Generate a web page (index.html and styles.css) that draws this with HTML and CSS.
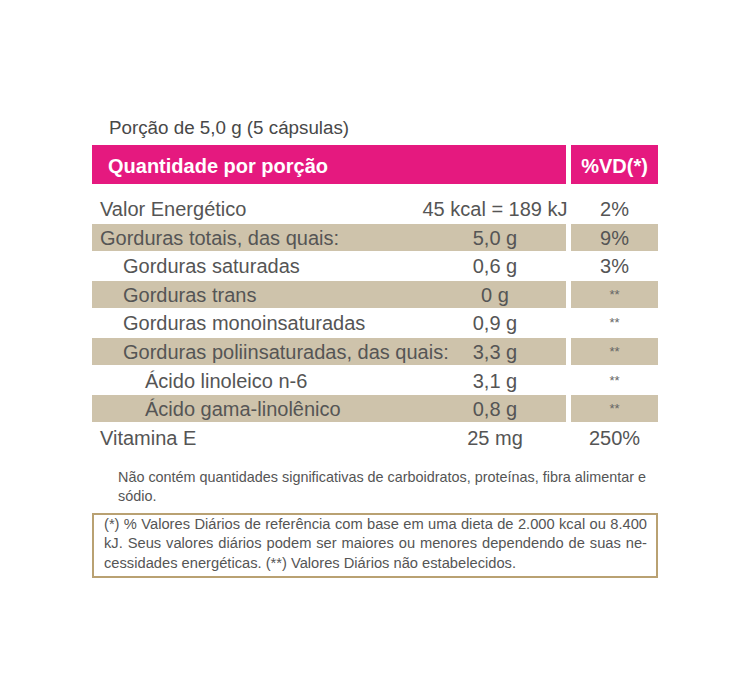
FILE: index.html
```html
<!DOCTYPE html>
<html lang="pt">
<head>
<meta charset="utf-8">
<link rel="stylesheet" href="styles.css">
</head>
<body>
<div class="label">
  <div class="portion">Porção de 5,0 g (5 cápsulas)</div>
  <div class="head">
    <div class="head-cell head-main">Quantidade por porção</div>
    <div class="head-cell head-vd">%VD(*)</div>
  </div>
  <div class="rows">
    <div class="row"><div class="main"><div class="name">Valor Energético</div><div class="val">45 kcal = 189 kJ</div></div><div class="vd">2%</div></div>
    <div class="row shade"><div class="main"><div class="name">Gorduras totais, das quais:</div><div class="val">5,0 g</div></div><div class="vd">9%</div></div>
    <div class="row"><div class="main"><div class="name ind1">Gorduras saturadas</div><div class="val">0,6 g</div></div><div class="vd">3%</div></div>
    <div class="row shade"><div class="main"><div class="name ind1">Gorduras trans</div><div class="val">0 g</div></div><div class="vd small">**</div></div>
    <div class="row"><div class="main"><div class="name ind1">Gorduras monoinsaturadas</div><div class="val">0,9 g</div></div><div class="vd small">**</div></div>
    <div class="row shade"><div class="main"><div class="name ind1">Gorduras poliinsaturadas, das quais:</div><div class="val">3,3 g</div></div><div class="vd small">**</div></div>
    <div class="row"><div class="main"><div class="name ind2">Ácido linoleico n-6</div><div class="val">3,1 g</div></div><div class="vd small">**</div></div>
    <div class="row shade"><div class="main"><div class="name ind2">Ácido gama-linolênico</div><div class="val">0,8 g</div></div><div class="vd small">**</div></div>
    <div class="row"><div class="main"><div class="name">Vitamina E</div><div class="val">25 mg</div></div><div class="vd">250%</div></div>
  </div>
  <p class="note">Não contém quantidades significativas de carboidratos, proteínas, fibra alimentar e sódio.</p>
  <div class="box">
    <span class="jl">(*) % Valores Diários de referência com base em uma dieta de 2.000 kcal ou 8.400</span>
    <span class="jl">kJ. Seus valores diários podem ser maiores ou menores dependendo de suas ne-</span>
    <span class="ll">cessidades energéticas. (**) Valores Diários não estabelecidos.</span>
  </div>
</div>
</body>
</html>
```
FILE: styles.css
```css
html, body {
  margin: 0;
  padding: 0;
  background: #ffffff;
}
body {
  font-family: "Liberation Sans", Arial, sans-serif;
  color: #555555;
}
.label {
  width: 566px;
  margin: 0 auto;
  padding-top: 116px;
}
.portion {
  font-size: 18.8px;
  line-height: 24px;
  color: #484848;
  padding-left: 17px;
  margin-bottom: 5px;
}
.head {
  display: grid;
  grid-template-columns: 474px 87px;
  column-gap: 5px;
  height: 36px;
}
.head-cell {
  background: #e5197f;
  color: #ffffff;
  font-weight: bold;
  font-size: 20px;
  line-height: 36px;
  padding-top: 3px;
  box-sizing: border-box;
}
.head-main {
  padding-left: 16px;
}
.head-vd {
  text-align: center;
}
.rows {
  display: flex;
  flex-direction: column;
  gap: 2.6px;
  margin-top: 14px;
}
.row {
  display: grid;
  grid-template-columns: 474px 87px;
  column-gap: 5px;
  height: 26px;
  font-size: 20px;
  line-height: 26px;
}
.main {
  display: grid;
  grid-template-columns: 332px 142px;
}
.name,
.val,
.vd {
  white-space: nowrap;
  padding-top: 1px;
  box-sizing: border-box;
}
.vd {
  text-align: center;
}
.val {
  display: flex;
  justify-content: center;
}
.row.shade .main,
.row.shade .vd {
  background: #cec3ab;
}
.name {
  padding-left: 8px;
}
.name.ind1 {
  padding-left: 31px;
}
.name.ind2 {
  padding-left: 53px;
}
.vd.small {
  font-size: 13px;
  color: #666666;
}
.note {
  margin: 18px 0 0 0;
  padding: 0 8px 0 26px;
  font-size: 14.4px;
  line-height: 19.5px;
  color: #555555;
}
.box {
  margin-top: 6px;
  border: 2px solid #b9a172;
  padding: 0 9px 3px 10px;
  font-size: 14.7px;
  line-height: 19.5px;
  color: #555555;
}
.jl {
  display: block;
  text-align: justify;
  text-align-last: justify;
}
.ll {
  display: block;
}
```
